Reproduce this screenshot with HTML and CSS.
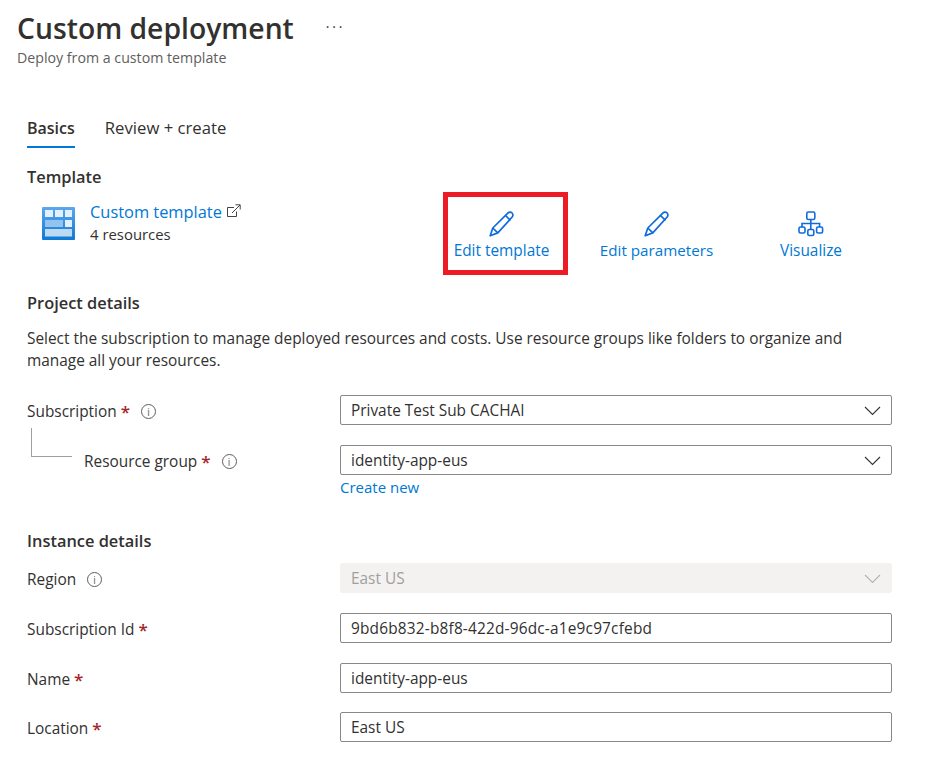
FILE: index.html
```html
<!DOCTYPE html>
<html lang="en">
<head>
  <meta charset="UTF-8">
  <title>Custom deployment</title>
  <link rel="stylesheet" href="styles.css">
</head>
<body>
  <header class="page-head">
    <div class="title-row">
      <h1>Custom deployment</h1>
      <span class="more">···</span>
    </div>
    <p class="subtitle">Deploy from a custom template</p>
  </header>

  <main class="content">
    <nav class="tabs">
      <a class="tab active">Basics</a>
      <a class="tab">Review + create</a>
    </nav>

    <h2 class="section-template">Template</h2>
    <div class="template-row">
      <div class="template-info">
        <svg class="table-icon" width="33" height="33" viewBox="0 0 33 33">
          <defs>
            <linearGradient id="tableBg" x1="0" y1="0" x2="0" y2="1">
              <stop offset="0" stop-color="#5ba8ee"/>
              <stop offset="1" stop-color="#0f78d4"/>
            </linearGradient>
          </defs>
          <rect width="33" height="33" rx="1" fill="url(#tableBg)"/>
          <rect x="3" y="3" width="8" height="7" fill="#e4f1fc"/>
          <rect x="13" y="3" width="8" height="7" fill="#e4f1fc"/>
          <rect x="23" y="3" width="7" height="7" fill="#e4f1fc"/>
          <rect x="3" y="13" width="18" height="7" fill="#93c4f0"/>
          <rect x="23" y="13" width="7" height="7" fill="#e4f1fc"/>
          <rect x="3" y="22" width="27" height="7.500" fill="#bcdaf4"/>
        </svg>
        <div>
          <a class="link template-link">Custom template<svg class="ext" width="14" height="14" viewBox="0 0 14 14" fill="none" stroke="#444" stroke-width="1">
              <path d="M7 3.500H.5v9h9V7.500"/>
              <path d="M5 9l8-8M8.500 .8h4.700v4.700"/>
            </svg></a>
          <div class="resources">4 resources</div>
        </div>
      </div>
      <div class="actions">
        <a class="action action-marked">
          <svg width="26" height="26" viewBox="0 0 26 26" fill="none" stroke="#0f6cdb" stroke-width="1.700" stroke-linejoin="round">
            <path d="M1.200 24.800l2.600-7.800L18.800 2.200c1.400-1.400 3.300-1.200 4.300-.2s1.200 2.900-.2 4.300L8.800 21.900z"/>
            <path d="M3.800 17l5 4.900M16.500 4.500l5 4.900"/>
          </svg>
          <span>Edit template</span>
        </a>
        <a class="action action-params">
          <svg width="26" height="26" viewBox="0 0 26 26" fill="none" stroke="#0f6cdb" stroke-width="1.700" stroke-linejoin="round">
            <path d="M1.200 24.800l2.600-7.800L18.800 2.200c1.400-1.400 3.300-1.200 4.300-.2s1.200 2.900-.2 4.300L8.800 21.900z"/>
            <path d="M3.800 17l5 4.900M16.500 4.500l5 4.900"/>
          </svg>
          <span class="params-label">Edit parameters</span>
        </a>
        <a class="action action-visual">
          <svg width="26" height="26" viewBox="0 0 26 26" fill="none" stroke="#0f6cdb" stroke-width="1.600">
            <rect x="8.800" y="1" width="8" height="7.500" rx="1.500"/>
            <rect x="1" y="16" width="6" height="6" rx="1.500"/>
            <rect x="9.800" y="18.500" width="6" height="6" rx="1.500"/>
            <rect x="18.600" y="16" width="6" height="6" rx="1.500"/>
            <path d="M12.800 8.500v10M4 16v-3.500h17.600V16"/>
          </svg>
          <span>Visualize</span>
        </a>
      </div>
    </div>

    <h2 class="section-project">Project details</h2>
    <p class="description">Select the subscription to manage deployed resources and costs. Use resource groups like folders to organize and manage all your resources.</p>

    <div class="form-row row-sub">
      <label>Subscription <span class="req">*</span><span class="info">i</span></label>
      <div class="field select">Private Test Sub CACHAI<svg class="chev" width="17" height="10" viewBox="0 0 17 10"><path d="M1 1l7.500 7.500L16 1" fill="none" stroke="#333" stroke-width="1.100"/></svg></div>
    </div>
    <div class="form-row row-group">
      <label><span class="connector"></span>Resource group <span class="req">*</span><span class="info">i</span></label>
      <div>
        <div class="field select">identity-app-eus<svg class="chev" width="17" height="10" viewBox="0 0 17 10"><path d="M1 1l7.500 7.500L16 1" fill="none" stroke="#333" stroke-width="1.100"/></svg></div>
        <a class="link create-new">Create new</a>
      </div>
    </div>

    <h2 class="section-instance">Instance details</h2>
    <div class="form-row row-region">
      <label>Region<span class="info">i</span></label>
      <div class="field select disabled">East US<svg class="chev" width="17" height="10" viewBox="0 0 17 10"><path d="M1 1l7.500 7.500L16 1" fill="none" stroke="#b5b3b1" stroke-width="1.100"/></svg></div>
    </div>
    <div class="form-row">
      <label>Subscription Id <span class="req">*</span></label>
      <div class="field field-id">9bd6b832-b8f8-422d-96dc-a1e9c97cfebd</div>
    </div>
    <div class="form-row">
      <label>Name <span class="req">*</span></label>
      <div class="field">identity-app-eus</div>
    </div>
    <div class="form-row row-location">
      <label>Location <span class="req">*</span></label>
      <div class="field">East US</div>
    </div>
  </main>
</body>
</html>
```

FILE: styles.css
```css
* {
  box-sizing: border-box;
}
body {
  margin: 0;
  height: 757px;
  overflow: hidden;
  background: #fff;
  color: #323130;
  font-family: "Open Sans", "Noto Sans", sans-serif;
  font-size: 15.4px;
  line-height: 20px;
}
h1, h2, p {
  margin: 0;
}
.page-head {
  padding: 9px 0 0 17px;
}
.title-row {
  display: flex;
  align-items: center;
  height: 38px;
}
h1 {
  font-size: 28.3px;
  font-weight: 600;
  line-height: 38px;
}
.more {
  margin-left: 32px;
  font-size: 14px;
  letter-spacing: 2.8px;
  margin-top: -2px;
}
.subtitle {
  margin-top: 1px;
  font-size: 14.2px;
  color: #605e5c;
}
.content {
  padding: 0 60px 0 27px;
}
.tabs {
  display: flex;
  gap: 30px;
  margin-top: 50px;
}
.tab {
  padding-bottom: 8px;
  font-size: 16.700px;
}
.tab.active {
  font-size: 16px;
  font-weight: 600;
  border-bottom: 2px solid #0078d4;
}
h2 {
  font-size: 16.400px;
  font-weight: 600;
  line-height: 22px;
}
.section-template {
  margin-top: 18px;
}
.template-row {
  display: flex;
  height: 82px;
  margin-top: 14px;
}
.template-info {
  display: flex;
  gap: 15px;
  width: 416px;
  padding-left: 15px;
}
.table-icon {
  margin-top: 5px;
}
.link {
  color: #0078d4;
}
.template-link {
  font-size: 16.400px;
}
.ext {
  margin-left: 5px;
}
.resources {
  margin-top: 1px;
  font-size: 14.900px;
}
.actions {
  display: flex;
  height: 83px;
  margin-top: -10px;
}
.action {
  display: flex;
  flex-direction: column;
  align-items: center;
  height: 83px;
  padding-top: 14px;
  border: 5px solid transparent;
  color: #0078d4;
}
.action span {
  margin-top: 4px;
}
.action .params-label {
  margin-top: 3px;
  font-size: 15.200px;
}
.action-marked {
  width: 125px;
  padding-right: 8px;
  border-color: #ed1c24;
}
.action-params {
  width: 125px;
  margin-left: 26px;
}
.action-visual {
  width: 72px;
  margin-left: 56px;
}
.section-project {
  margin-top: 8px;
}
.description {
  margin-top: 14px;
  line-height: 22px;
  width: 840px;
}
.form-row {
  display: grid;
  grid-template-columns: 313px 552px;
  align-items: start;
  margin-top: 20px;
}
.form-row label {
  display: flex;
  align-items: center;
  height: 30px;
  padding-top: 3px;
  white-space: pre;
}
.row-sub {
  margin-top: 23px;
}
.row-group label {
  padding-left: 4px;
}
.connector {
  width: 41px;
  height: 29px;
  margin: -39px 12px 0 0;
  border-left: 1px solid #a19f9d;
  border-bottom: 1px solid #a19f9d;
}
.req {
  color: #a4262c;
  font-size: 17px;
  font-weight: 600;
}
.info {
  display: flex;
  align-items: center;
  justify-content: center;
  width: 15px;
  height: 15px;
  margin-left: 11px;
  border: 1px solid #605e5c;
  border-radius: 50%;
  font-size: 10px;
  line-height: 1;
  color: #605e5c;
}
.field {
  display: flex;
  align-items: center;
  height: 30px;
  padding: 2px 0 0 10px;
  border: 1px solid #8a8886;
  border-radius: 2px;
  background: #fff;
}
.field-id {
  letter-spacing: .19px;
}
.select {
  justify-content: space-between;
  padding-right: 10px;
}
.disabled {
  border-color: #f3f2f1;
  background: #f3f2f1;
  color: #a19f9d;
}
.create-new {
  display: block;
  margin-top: 2px;
  font-size: 15px;
}
.section-instance {
  margin-top: 33px;
}
.row-region {
  margin-top: 11px;
}
.row-location {
  margin-top: 19px;
}
```
